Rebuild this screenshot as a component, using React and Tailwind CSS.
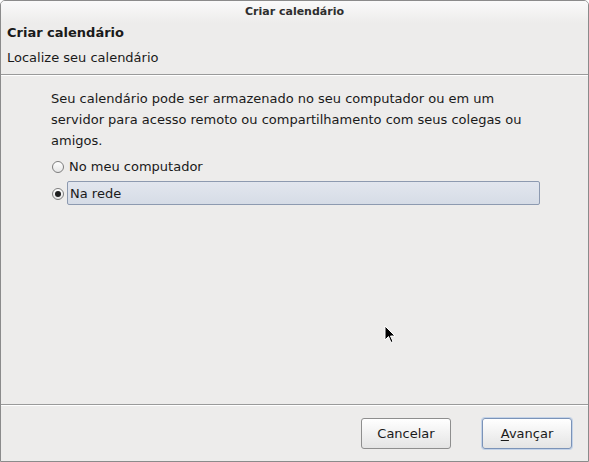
import React from "react";

function Radio({ checked }) {
  return (
    <span className="w-[12px] h-[12px] rounded-full border border-[#7d7d7d] bg-gradient-to-b from-white to-[#e6e6e6] flex items-center justify-center shrink-0">
      {checked && <span className="w-[6px] h-[6px] rounded-full bg-[#1f1f1f]" />}
    </span>
  );
}

function Cursor() {
  return (
    <svg width="12" height="19" viewBox="0 0 12 19" className="absolute left-[383px] top-[324px]">
      <path d="M1 1 L1 15 L4.5 11.5 L7 17.5 L9 16.5 L6.5 11 L11 11 Z" fill="#000" stroke="#fff" strokeWidth="1" strokeLinejoin="round" />
    </svg>
  );
}

export default function App() {
  return (
    <div
      className="relative w-[589px] h-[462px] bg-[#edeceb] border border-[#8b8b8b] rounded-t-[5px] flex flex-col text-[#1a1a1a] overflow-hidden"
      style={{ fontFamily: '"DejaVu Sans", sans-serif' }}
    >
      <div className="h-[22px] shrink-0 flex items-center justify-center text-[11px] font-bold bg-gradient-to-b from-[#fafafa] to-[#edeceb] text-[#2e2e2e]">
        Criar calendário
      </div>
      <div className="h-[51px] shrink-0 px-[6px] flex flex-col">
        <div className="h-[20px] flex items-center text-[13px] font-bold">Criar calendário</div>
        <div className="h-[29px] flex items-center text-[13px]">Localize seu calendário</div>
      </div>
      <div className="h-[2px] shrink-0 border-t border-[#9a9a9a] bg-white" />
      <div className="flex-1 pl-[50px] pr-[40px] pt-[12px] text-[13px]">
        <p className="leading-[21px] w-[480px]">
          Seu calendário pode ser armazenado no seu computador ou em um servidor para acesso remoto ou compartilhamento com seus colegas ou amigos.
        </p>
        <div className="flex flex-col gap-[2px] mt-[4px]">
          <label className="flex items-center gap-[5px] h-[24px] pl-[1px]">
            <Radio />
            <span>No meu computador</span>
          </label>
          <label className="flex items-center gap-[3px] h-[24px] pl-[1px]">
            <span className="pt-[2px]">
              <Radio checked />
            </span>
            <span className="flex-1 h-[24px] flex items-center pt-[2px] pl-[2px] border border-[#8d9ab0] rounded-[2px] bg-gradient-to-b from-[#e2e6ee] to-[#d6dce6] mr-[8px]">
              Na rede
            </span>
          </label>
        </div>
      </div>
      <div className="h-[2px] shrink-0 border-t border-[#9a9a9a] bg-white" />
      <div className="h-[55px] shrink-0 flex items-start justify-end gap-[31px] pr-[16px] pt-[12px] text-[13px]">
        <button className="w-[90px] h-[31px] rounded-[3px] border border-[#8e8e8e] bg-gradient-to-b from-white to-[#e4e4e4] shadow-[inset_0_1px_0_#fff]">
          Cancelar
        </button>
        <button className="w-[90px] h-[31px] rounded-[3px] border border-[#7b93b8] bg-gradient-to-b from-white to-[#e4e4e4] shadow-[0_0_0_1px_#c4d3e8]">
          <span className="underline underline-offset-2">A</span>vançar
        </button>
      </div>
      <Cursor />
    </div>
  );
}
